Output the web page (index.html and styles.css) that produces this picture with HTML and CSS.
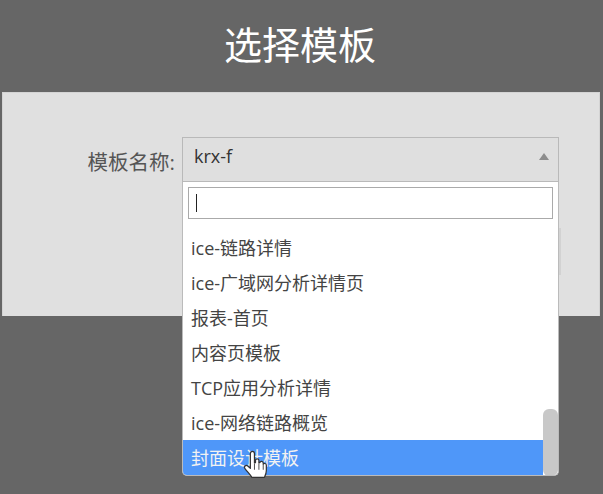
FILE: index.html
```html
<!doctype html>
<html>
    <head>
        <meta charset=utf-8>
        <title>选择模板</title>
        <link rel="stylesheet" href="styles.css">
    </head>
    <body>
        <h1 class="page-title">选择模板</h1>
        <div class="panel">
            <div class="field">
                <label class="field-label">模板名称:</label>
                <div class="select">
                    <div class="select-value">
                        <span>krx-f</span>
                        <i class="arrow-up"></i>
                    </div>
                    <div class="dropdown">
                        <div class="search"><span class="caret"></span></div>
                        <div class="list">
                            <div class="list-scroll">
                                <div class="option">ice-链路详情</div>
                                <div class="option">ice-广域网分析详情页</div>
                                <div class="option">报表-首页</div>
                                <div class="option">内容页模板</div>
                                <div class="option">TCP应用分析详情</div>
                                <div class="option">ice-网络链路概览</div>
                                <div class="option active">封面设计模板</div>
                            </div>
                            <div class="scrollbar"><div class="thumb"></div></div>
                        </div>
                    </div>
                    <div class="behind-button"></div>
                </div>
            </div>
        </div>
        <svg class="hand" viewBox="0 0 24 32" width="25" height="33">
            <path d="M7 4.5c0-3 4-3 4 0v9l1-.3V11c0-2 3.300-2 3.300 0v2.500l.9-.2c.4-1.800 3.300-1.600 3.300.4v1.100c.5-1.300 3-1 3 .9v5.300c0 2.500-.7 4-1.800 6.500H8.500C7 25 4.500 22.500 1.800 19c-1.500-2 .8-4 2.700-2.500L7 18.800z" fill="#fff" stroke="#333" stroke-width="1.200" stroke-linejoin="round"/>
            <path d="M11 14v6M15.300 14v6M19.500 15v5" stroke="#555" stroke-width="1" fill="none"/>
        </svg>
    </body>
</html>
```

FILE: styles.css
```css
body {
    margin: 0;
    height: 494px;
    overflow: hidden;
    position: relative;
    background: #666;
    font-family: "Open Sans", "Noto Sans CJK SC", sans-serif;
    color: #333;
}

.page-title {
    margin: 0;
    height: 92px;
    line-height: 88px;
    padding-right: 3px;
    text-align: center;
    font-size: 38px;
    font-weight: 400;
    color: #fff;
}

.panel {
    margin: 0 3px 0 2px;
    height: 224px;
    padding-top: 44px;
    box-sizing: border-box;
    background: #e0e0e0;
    border: 1px solid #d4d4d4;
    border-width: 1px 1px 0 1px;
}

.field {
    display: flex;
    align-items: flex-start;
}

.field-label {
    width: 172px;
    text-align: right;
    font-size: 20.500px;
    line-height: 50px;
    color: #555;
}

.select {
    position: relative;
    width: 377px;
    margin-left: 7px;
}

.select-value {
    height: 45px;
    box-sizing: border-box;
    display: flex;
    justify-content: space-between;
    align-items: center;
    padding: 0 9px 7px 11px;
    font-size: 18px;
    background: #dfdfdf;
    border: 1px solid #b9b9b9;
}

.arrow-up {
    border-left: 5px solid transparent;
    border-right: 5px solid transparent;
    border-bottom: 7px solid #8c8c8c;
}

.dropdown {
    position: absolute;
    z-index: 2;
    top: 45px;
    left: 0;
    right: 0;
    height: 294px;
    box-sizing: border-box;
    background: #fff;
    border: 1px solid #bbb;
    border-top: none;
    border-radius: 0 0 5px 5px;
    overflow: hidden;
    padding-top: 5px;
}

.search {
    height: 32px;
    margin: 0 5px;
    box-sizing: border-box;
    border: 1px solid #aaa;
    padding: 6px 7px;
}

.caret {
    display: block;
    width: 1px;
    height: 18px;
    background: #222;
}

.list {
    display: flex;
    margin-top: 10px;
    height: 247px;
}

.list-scroll {
    flex: 1;
    display: flex;
    flex-direction: column;
    justify-content: flex-end;
}

.option {
    height: 35px;
    line-height: 37px;
    padding-left: 8px;
    font-size: 18px;
    color: #444;
}

.option.active {
    height: 36px;
    background: #4f97f9;
    color: #f2f2f2;
}

.scrollbar {
    width: 15px;
    display: flex;
    align-items: flex-end;
}

.thumb {
    width: 100%;
    height: 67px;
    background: #c8c8c8;
    border-radius: 6px;
}

/* the button under the open dropdown, only its edge shows */
.behind-button {
    position: absolute;
    top: 91px;
    left: 100%;
    width: 2px;
    height: 47px;
    background: #d2d2d2;
}

.hand {
    position: absolute;
    z-index: 3;
    left: 243px;
    top: 449px;
}
```
